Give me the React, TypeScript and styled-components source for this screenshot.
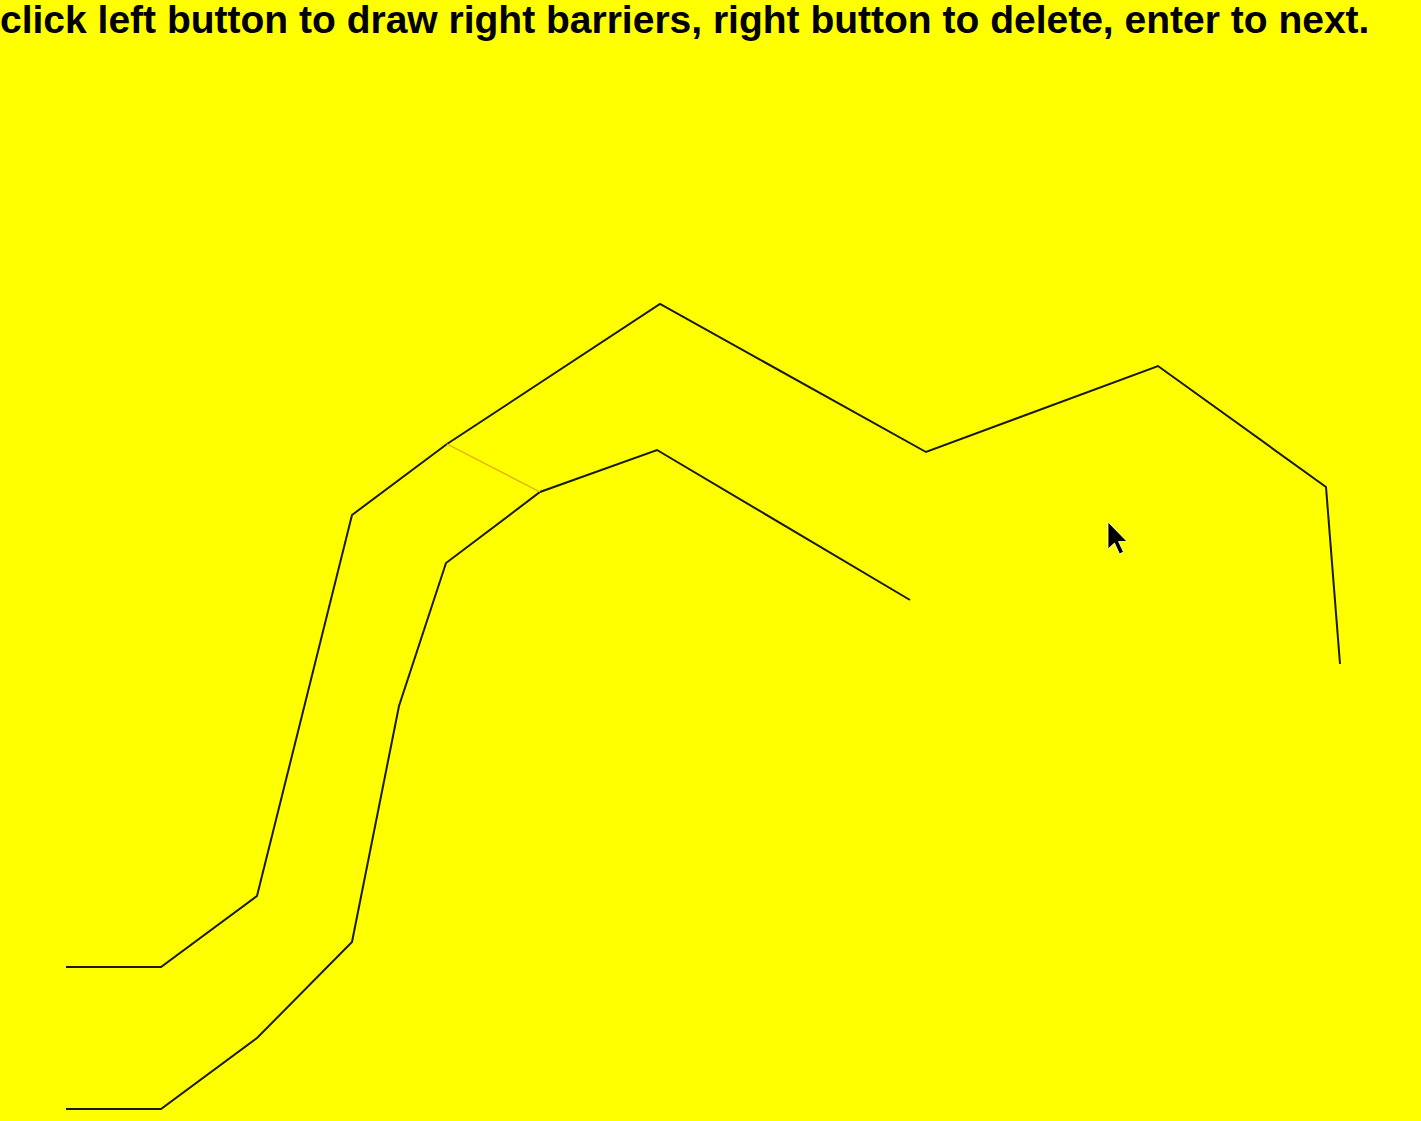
import React from "react";
import styled, { createGlobalStyle } from "styled-components";

const Global = createGlobalStyle`
  html, body { margin: 0; padding: 0; background: #ffff00; }
  #root { height: 1121px; }
`;

const Stage = styled.div`
  width: 1421px;
  height: 1121px;
  background: #ffff00;
  display: flex;
  flex-direction: column;
  overflow: hidden;
`;

const Caption = styled.div`
  font-family: "Liberation Sans", Arial, sans-serif;
  font-weight: bold;
  font-size: 39px;
  line-height: 40px;
  height: 44px;
  color: #000;
  white-space: nowrap;
`;

const Board = styled.div`
  position: relative;
  flex: 1;
`;

const Drawing = styled.svg`
  display: block;
  width: 100%;
  height: 100%;
`;

const Pointer = styled.svg`
  position: absolute;
  left: 1106px;
  top: 476px;
  width: 26px;
  height: 38px;
`;

const outer: [number, number][] = [
  [66, 967], [161, 967], [257, 896], [352, 515], [447, 444], [660, 304],
  [926, 452], [1158, 366], [1326, 487], [1340, 664],
];
const inner: [number, number][] = [
  [66, 1109], [161, 1109], [257, 1038], [352, 942], [399, 706], [446, 563],
  [540, 492], [657, 450], [910, 600],
];

const pts = (a: [number, number][]) => a.map(([x, y]) => `${x},${y}`).join(" ");

export default function App() {
  return (
    <>
      <Global />
      <Stage>
        <Caption>click left button to draw right barriers, right button to delete, enter to next.</Caption>
        <Board>
          <Drawing viewBox="0 44 1421 1077" preserveAspectRatio="none">
            <polyline points={pts(outer)} fill="none" stroke="#1a1a00" strokeWidth={2} strokeLinejoin="miter" />
            <polyline points={pts(inner)} fill="none" stroke="#1a1a00" strokeWidth={2} strokeLinejoin="miter" />
            <line x1={447} y1={444} x2={540} y2={492} stroke="#e8a800" strokeWidth={1.3} />
          </Drawing>
          <Pointer viewBox="0 0 26 38">
            <path d="M2 2 L2 29 L8.5 23 L13.5 34 L17.5 32 L12.5 21.5 L21 21.5 Z" fill="#000" stroke="#fff" strokeWidth={0.8} strokeLinejoin="miter" />
          </Pointer>
        </Board>
      </Stage>
    </>
  );
}
